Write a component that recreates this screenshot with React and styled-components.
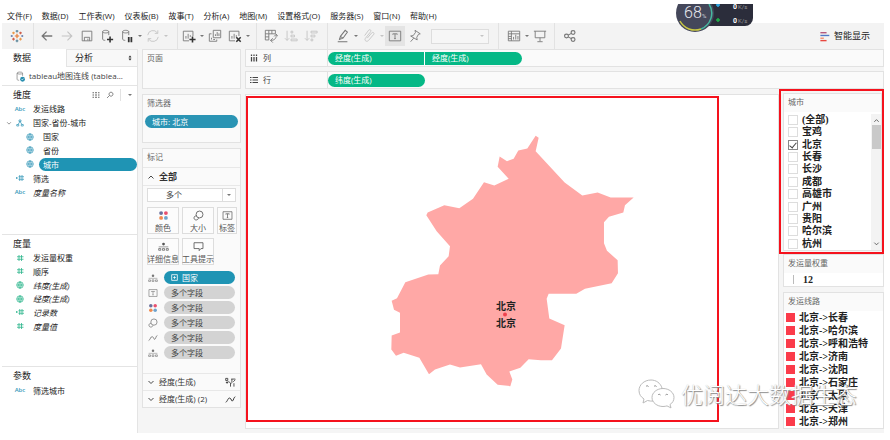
import React from 'react';
import styled, { createGlobalStyle, css } from 'styled-components';

const GlobalStyle = createGlobalStyle`
  * {
    box-sizing: border-box;
  }

  body {
    margin: 0;
    background: #fff;
    color: #444;
    font-family: 'Open Sans', 'Noto Sans CJK SC', sans-serif;
    font-size: 8px;
    line-height: 12px;
  }

  button, input, select {
    margin: 0;
    padding: 0;
    border: 0;
    background: none;
    color: inherit;
    font: inherit;
  }

  ul {
    margin: 0;
    padding: 0;
    list-style: none;
  }

  svg {
    display: block;
    flex-shrink: 0;
  }
`;

const Page = styled.div`
  position: relative;
  display: flex;
  flex-direction: column;
  min-height: 100vh;
  padding: 0 6px 8px 2px;
`;

const MenuBar = styled.nav`
  display: flex;
  align-items: flex-end;
  gap: 10px;
  height: 23px;
  padding: 0 5px 1px;
`;

const MenuItem = styled.button`
  color: #222;
  white-space: nowrap;
`;

const Toolbar = styled.div`
  display: flex;
  align-items: center;
  height: 26px;
  background: #f3f3f3;
  color: #777;
`;

const ToolGroup = styled.div`
  display: flex;
  align-items: center;
  height: 26px;
  padding: 0 ${({ $right }) => $right}px 0 ${({ $left }) => $left}px;
  border-right: 1px solid ${({ $last }) => ($last ? 'transparent' : '#e2e2e2')};
`;

const ToolButton = styled.button`
  display: flex;
  align-items: center;
  justify-content: center;
  width: 20px;
  height: 20px;
  background: ${({ $active }) => ($active ? '#e4e4e4' : 'none')};
  color: ${({ $faded }) => ($faded ? '#c4c4c4' : '#777')};
`;

const Caret = styled.span`
  width: 4px;
  margin: 0 1px;
  border: 2px solid transparent;
  border-top-color: ${({ $faded }) => ($faded ? '#c4c4c4' : '#777')};
  border-bottom: 0;
`;

const FitBox = styled.div`
  display: flex;
  align-items: center;
  width: 58px;
  height: 15px;
  margin-left: 6px;
  padding-right: 3px;
  border: 1px solid #ddd;
  background: #f6f6f6;
`;

const FitSelect = styled.select`
  appearance: none;
  flex: 1;
  min-width: 0;
  height: 13px;
`;

const ShowMe = styled.button`
  display: flex;
  align-items: center;
  gap: 4px;
  margin-left: auto;
  padding-right: 14px;
  color: #222;
  font-size: 9px;
`;

const Workspace = styled.div`
  display: flex;
  flex: 1;
  gap: 4px;
  background: #f5f5f5;
`;

const DataPane = styled.aside`
  display: flex;
  flex-direction: column;
  width: 136px;
  background: #fff;
  border-right: 1px solid #e4e4e4;
`;

const Tabs = styled.div`
  display: flex;
  height: 18px;
  font-size: 9px;
`;

const Tab = styled.button`
  display: flex;
  align-items: center;
  justify-content: space-between;
  width: ${({ $selected }) => ($selected ? '64px' : 'auto')};
  flex: ${({ $selected }) => ($selected ? 'none' : 1)};
  padding: 0 4px 0 ${({ $selected }) => ($selected ? 11 : 8)}px;
  color: #222;
  ${({ $selected }) =>
    !$selected &&
    css`
      background: #f8f8f8;
      border: 1px solid #e4e4e4;
      border-right: 0;
    `}
`;

const Source = styled.div`
  display: flex;
  align-items: center;
  gap: 3px;
  height: 18px;
  padding-left: 13px;
  white-space: nowrap;
`;

const PaneSection = styled.section`
  height: ${({ $height }) => ($height ? `${$height}px` : 'auto')};
  border-top: 1px solid #e4e4e4;
`;

const PaneHeader = styled.div`
  display: flex;
  align-items: center;
  gap: 6px;
  height: 16px;
  padding: 1px 4px 0 11px;
  color: #666;
`;

const PaneTitle = styled.h2`
  flex: 1;
  margin: 0;
  color: #222;
  font-size: 9px;
  font-weight: 400;
`;

const HeaderRule = styled.span`
  width: 1px;
  height: 12px;
  background: #e2e2e2;
`;

const FieldList = styled.ul`
  display: grid;
  grid-auto-rows: 1fr;
  height: ${({ $height }) => $height}px;
`;

const Field = styled.li`
  position: relative;
  display: flex;
  align-items: center;
  gap: 3px;
  padding-left: ${({ $nested }) => ($nested ? 22 : 12)}px;
  color: ${({ $measure }) => ($measure ? '#2cb58c' : '#3a9aba')};
`;

const Expander = styled.span`
  position: absolute;
  left: 4px;
  color: #666;
`;

const FieldIcon = styled.span`
  display: flex;
  justify-content: center;
  width: 12px;
  font-size: 6px;
  font-weight: 600;
`;

const FieldName = styled.span`
  flex: 1;
  height: 13px;
  padding-left: 4px;
  border-radius: 7px;
  background: ${({ $selected }) => ($selected ? '#1f94b4' : 'none')};
  color: ${({ $selected }) => ($selected ? '#fff' : '#222')};
  font-style: ${({ $generated }) => ($generated ? 'italic' : 'normal')};
  line-height: 13px;
  white-space: nowrap;
`;

const CardColumn = styled.div`
  display: flex;
  flex-direction: column;
  gap: 5px;
  width: 99px;
`;

const Card = styled.section`
  height: ${({ $height }) => ($height ? `${$height}px` : 'auto')};
  border: 1px solid #e2e2e2;
  background: #fafafa;
`;

const CardTitle = styled.h3`
  margin: 0;
  padding: 2px 4px 4px;
  color: #666;
  font-size: 8px;
  font-weight: 400;
  line-height: 12px;
`;

const Pill = styled.div`
  display: flex;
  align-items: center;
  gap: 4px;
  height: 13px;
  padding: 0 7px;
  border-radius: 7px;
  background: ${({ $tone }) => $tone};
  color: ${({ $dark }) => ($dark ? '#444' : '#fff')};
  white-space: nowrap;
`;

const FilterShelf = styled.div`
  padding: 2px;
`;

const LayerHeader = styled.button`
  display: flex;
  align-items: center;
  gap: 4px;
  width: 100%;
  height: ${({ $open }) => ($open ? 18 : 17)}px;
  padding: 0 4px;
  border-top: 1px solid #e8e8e8;
  color: #333;
  font-size: ${({ $open }) => ($open ? 9 : 8)}px;
  font-weight: ${({ $open }) => ($open ? 700 : 400)};
`;

const LayerName = styled.span`
  flex: 1;
  text-align: left;
`;

const MarksBody = styled.div`
  height: 188px;
  padding: 2px 4px;
  border-top: 1px solid #e8e8e8;
`;

const MarkType = styled.div`
  display: flex;
  align-items: center;
  height: 14px;
  padding-right: 3px;
  border: 1px solid #ddd;
  background: #fff;
`;

const MarkSelect = styled.select`
  appearance: none;
  flex: 1;
  height: 12px;
  margin-right: 3px;
  padding-left: 18px;
  border-right: 1px solid #ddd;
  color: #444;
`;

const MarkGrid = styled.div`
  display: grid;
  grid-template-columns: 32px 32px 20px;
  gap: 4px 3px;
  margin: 5px 0 6px;
`;

const MarkButton = styled.button`
  display: flex;
  flex-direction: column;
  align-items: center;
  justify-content: space-between;
  height: 27px;
  padding-top: 2px;
  border: 1px solid #ddd;
  background: #fcfcfc;
  color: #555;
  line-height: 11px;
  white-space: nowrap;
`;

const MarkRows = styled.ul`
  display: grid;
  gap: 2px;
`;

const MarkRow = styled.li`
  display: grid;
  grid-template-columns: 16px 71px;
  align-items: center;
  height: 13px;
  padding-left: 1px;
  color: #777;
`;

const Main = styled.main`
  display: flex;
  flex: 1;
  flex-direction: column;
  gap: 4px;
  min-width: 0;
`;

const Shelf = styled.div`
  display: flex;
  align-items: center;
  height: 18px;
  border: 1px solid #e2e2e2;
  background: #fafafa;
`;

const ShelfName = styled.div`
  display: flex;
  align-items: center;
  gap: 5px;
  width: 82px;
  height: 16px;
  padding-left: 4px;
  border-right: 1px solid #e2e2e2;
`;

const ShelfPill = styled(Pill)`
  width: 97px;
  background: #05b886;
  border-radius: ${({ $start, $end }) =>
    `${$start ? 7 : 0}px ${$end ? 7 : 0}px ${$end ? 7 : 0}px ${$start ? 7 : 0}px`};
  border-right: ${({ $end }) => ($end ? 0 : 1)}px solid #fff;
`;

const Stage = styled.div`
  display: flex;
  flex: 1;
  min-height: 0;
`;

const Canvas = styled.section`
  flex: 1;
  display: flex;
  min-width: 0;
  margin: 1px 0 4px;
  padding: 1px 59px 6px 0;
  border: 1px solid #e2e2e2;
  background: #fff;
`;

const MapFrame = styled.div`
  display: flex;
  flex: 1;
  min-width: 0;
  border: 2px solid #f5121d;
`;

const MapDrawing = styled.svg`
  flex: 1;
  width: 100%;
  min-width: 0;
`;

const MapLabel = styled.text`
  fill: #222;
  font-family: 'Liberation Serif', 'Noto Sans CJK SC', serif;
  font-size: 10px;
  font-weight: 700;
  text-anchor: middle;
`;

const Legends = styled.aside`
  display: flex;
  flex-direction: column;
  width: 105px;
  padding-bottom: 4px;
`;

const Highlight = styled.div`
  margin-top: -4px;
  padding: 2px 0 1px 2px;
  border: 2px solid #f5121d;
`;

const LegendCard = styled(Card)`
  margin: ${({ $grow }) => ($grow ? 5 : 0)}px 0 0 ${({ $inset }) => ($inset ? 4 : 0)}px;
  flex: ${({ $grow }) => ($grow ? 1 : 'none')};
`;

const CityBody = styled.div`
  display: flex;
  height: 138px;
  padding-top: 2px;
  background: #fff;
`;

const CityList = styled.ul`
  display: grid;
  flex: 1;
  grid-auto-rows: 1fr;
`;

const CityLabel = styled.label`
  display: flex;
  align-items: center;
  gap: 4px;
  padding-left: 4px;
  color: #222;
  font-family: 'Liberation Serif', 'Noto Sans CJK SC', serif;
  font-size: 10px;
  font-weight: 700;
  line-height: 12px;
`;

const Checkbox = styled.input`
  appearance: none;
  display: flex;
  justify-content: center;
  width: 10px;
  height: 10px;
  border: 1px solid #ddd;
  background: #fff;

  &:checked {
    border-color: #888;
  }

  &:checked::after {
    content: '';
    width: 3px;
    height: 6px;
    border: solid #444;
    border-width: 0 1px 1px 0;
    transform: rotate(40deg);
  }
`;

const Scrollbar = styled.div`
  display: flex;
  flex-direction: column;
  align-items: center;
  width: 10px;
  padding: 3px 0;
  background: #f3f3f3;
  color: #444;
`;

const Thumb = styled.div`
  width: 9px;
  height: 24px;
  margin: 1px 0 auto;
  background: #c9c9c9;
`;

const SizeRow = styled.div`
  display: flex;
  align-items: center;
  gap: 9px;
  height: 13px;
  padding-left: 9px;
  background: #fff;
  color: #222;
  font-family: 'Liberation Serif', serif;
  font-size: 10px;
  font-weight: 700;

  &::before {
    content: '';
    width: 1px;
    height: 9px;
    background: #bbb;
  }
`;

const RouteList = styled.ul`
  background: #fff;
`;

const Route = styled.li`
  display: flex;
  align-items: center;
  gap: 4px;
  height: 13px;
  padding-left: 2px;
  color: #222;
  font-family: 'Liberation Serif', 'Noto Sans CJK SC', serif;
  font-size: 10px;
  font-weight: 700;
  white-space: nowrap;

  &::before {
    content: '';
    width: 9px;
    height: 9px;
    background: #fb3b4a;
  }
`;

const SpeedMeter = styled.svg`
  position: absolute;
  top: 4px;
  right: 135px;
`;

const Watermark = styled.div`
  position: absolute;
  right: 33px;
  bottom: 32px;
  display: flex;
  align-items: center;
  gap: 6px;
  color: #fff;
  font-size: 22px;
  font-weight: 300;
  line-height: 30px;
  text-shadow: 1px 1px 1px #888, 0 0 1px #bbb;
  pointer-events: none;
`;

const glyphs = {
  logo: (
    <g strokeWidth="1.3">
      <path d="M8 5.5v5M5.5 8h5" stroke="#e8762d" />
      <path d="M4 3v3M2.5 4.5h3M12 10v3M10.5 11.5h3" stroke="#eb9a4c" />
      <path d="M12 3v3M10.5 4.5h3M4 10v3M2.5 11.5h3" stroke="#d0604c" />
      <path d="M8 1v3M6.5 2.5h3M8 12v3M6.5 13.5h3" stroke="#5b879b" />
      <path d="M2 6.8v2.4M.8 8h2.4M14 6.8v2.4M12.8 8h2.4" stroke="#6a80ad" />
    </g>
  ),
  back: <path d="M14 8H2.5M7.5 3L2.5 8l5 5" strokeWidth="1.5" />,
  forward: <path d="M2 8h11.5M8.5 3l5 5-5 5" strokeWidth="1.3" />,
  save: <path d="M2.5 2.5h11v11h-11zM5 13.5v-4h6v4M9 11v2" />,
  addData: (
    <g>
      <path d="M3 3c0-2 7-2 7 0s-7 2-7 0v8.5c0 1 1.5 1.5 3 1.5M10 3v4" />
      <path d="M11.5 8.5v7M8 12h7" stroke="#333" strokeWidth="1.8" />
    </g>
  ),
  pauseData: (
    <g>
      <path d="M3 3c0-2 7-2 7 0s-7 2-7 0v8.5c0 1 1.5 1.5 3 1.5M10 3v4" />
      <path d="M10 9v6M13 9v6" stroke="#333" strokeWidth="2" />
    </g>
  ),
  source: (
    <g>
      <path d="M3 3c0-2 8-2 8 0s-8 2-8 0v9c0 1 1.5 1.5 3 1.5M11 3v4" stroke="#777" />
      <circle cx="11" cy="12" r="3.5" fill="#2a8fb0" stroke="none" />
      <path d="M9.5 12l1 1 2-2" stroke="#fff" />
    </g>
  ),
  refresh: <path d="M2 7a6 6 0 0 1 11-2.5M14 9a6 6 0 0 1-11 2.5M13.5 1.5v3.500H10M2.5 14.5V11H6" />,
  newSheet: (
    <g>
      <path d="M8 13.5H1.5v-11h11V8M4.5 11V8M7 11V5.5M9.5 9V7" />
      <path d="M12 8.5v7M8.5 12h7" stroke="#333" strokeWidth="1.8" />
    </g>
  ),
  duplicate: <path d="M6 1.5h8.500V10H6zM4 5.5H1.5V14H10v-2M8.5 8V6M10.5 8V3.500M12.5 8V5M4 12v-2M6 12h2" />,
  clearSheet: (
    <g>
      <path d="M8 13.5H1.5v-11h11V8M4.5 11V8M7 11V5.5M9.5 9V7" />
      <path d="M9.5 9.5l5 5M14.5 9.5l-5 5" stroke="#333" strokeWidth="1.8" />
    </g>
  ),
  swap: <path d="M1.5 1.500h11.500v4H5.500v7h-4zM5.500 1.500v4h-4M9 1.500v4M1.500 9h4M14 6v1c0 4-2 6-6.500 6M10 10.500L7.500 13l2.500 2.500M11.500 8.500L14 6l2 2.500" />,
  sortAsc: <path d="M3.5 2v11M1 10.5L3.5 13 6 10.5M8 2.5h2v2H8zM8 7h4v2H8zM8 11.5h7v2H8z" />,
  sortDesc: <path d="M3.5 2v11M1 10.5L3.5 13 6 10.5M8 2.5h7v2H8zM8 7h4.500v2H8zM8 11.5h2v2H8z" />,
  highlight: <path d="M5 8.500L10.500 1.500l2.500 2L8 10.500 4 12zM5 8.500l3 2M2 14.500h11" strokeWidth="1.2" />,
  clip: <path d="M6 10.5l5-6c1.5-1.5 3.5 0 2.5 1.500l-6 7c-2 2.500-5.500 0-3.500-2.500l5.500-7c2-2.500-1-3.500-2-2L3 7.500" />,
  text: <path d="M1.5 2.5h13v11h-13zM5.5 6.500v-1h5v1M8 5.500v5.500M7 11h2" />,
  pin: <path d="M8 1.500l6 4-2 .5-2 3.500.5 3L3 8l3-.5L8.500 4zM6.500 10.500L3 14.500" />,
  cards: <path d="M1.500 2.500h13v11h-13zM5 2.500v11M1.500 5.500h13M1.500 8.500H5M1.500 11H5M7.500 12V9M10 12V6.500M12.500 12V8" />,
  present: <path d="M1 2.500h14M2.500 2.500v7.500h11V2.500M8 10v4M5 14.500h6" />,
  share: (
    <g strokeWidth="1.3">
      <circle cx="4" cy="8" r="2.2" />
      <circle cx="11.5" cy="4" r="2.2" />
      <circle cx="11.5" cy="12" r="2.2" />
      <path d="M6 7l3.500-2M6 9l3.500 2" />
    </g>
  ),
  showMe: (
    <g strokeWidth="2">
      <path d="M2 2.500h9" stroke="#b2557b" />
      <path d="M2 6.500h13" stroke="#4e79c7" />
      <path d="M2 10.500h5" stroke="#f28e6b" />
      <path d="M2 14h9" stroke="#e8473f" />
    </g>
  ),
  columns: <path d="M3 6v9M8 6v9M13 6v9M3 1v3M8 1v3M13 1v3" strokeWidth="2.5" />,
  rows: <path d="M5 3h11M5 8h11M5 13h11M0 3h3M0 8h3M0 13h3" strokeWidth="2.2" />,
  grid: <path d="M1 3.500h3M6 3.500h4M12 3.500h3M1 8h3M6 8h4M12 8h3M1 12.500h3M6 12.500h4M12 12.500h3" strokeWidth="2" />,
  search: <path d="M7 9a4 4 0 1 1 6 0 4 4 0 0 1-6 0L2 14" strokeWidth="1.5" />,
  down: <path d="M3 6l5 5 5-5" strokeWidth="1.8" />,
  up: <path d="M3 11l5-5 5 5" strokeWidth="1.8" />,
  sorter: <path d="M8 2L5 6h6zM8 14l-3-4h6z" fill="currentColor" />,
  globe: (
    <g strokeWidth="1.5">
      <circle cx="8" cy="8" r="6.5" />
      <path d="M1.500 8h13M8 1.500v13M8 1.500c-4 4-4 9 0 13M8 1.500c4 4 4 9 0 13" />
    </g>
  ),
  hierarchy: <path d="M6 2h4v3H6zM1.500 11h4v3h-4zM10.500 11h4v3h-4zM8 5L4 11M8 5l4 6" strokeWidth="1.5" />,
  number: <path d="M6 2v12M11 2v12M2 5.500h13M2 10.500h13" strokeWidth="1.6" />,
  calc: <path d="M7.500 2v12M12 2v12M5 5.500h11M5 10.500h11M0 7h3M0 9h3" strokeWidth="1.6" />,
  colour: (
    <g stroke="none">
      <circle cx="4.5" cy="4.5" r="2.8" fill="#6a6f9c" />
      <circle cx="11.5" cy="4.5" r="2.8" fill="#e8506e" />
      <circle cx="4.5" cy="11.5" r="2.8" fill="#f08a4e" />
      <circle cx="11.5" cy="11.5" r="2.8" fill="#6fa3cc" />
    </g>
  ),
  size: (
    <g strokeWidth="1.2">
      <circle cx="9.5" cy="6.5" r="5" />
      <path d="M4.700 8.500C2.500 8.500 1.500 10 1.500 11.500c0 4 6 4 6.500 0" />
    </g>
  ),
  detail: (
    <g>
      <circle cx="8" cy="4.5" r="2" fill="currentColor" stroke="none" />
      <path d="M1 8.500h14" strokeWidth=".8" />
      <path d="M1 11h3v2.500H1zM6.500 11h3v2.500h-3zM12 11h3v2.500h-3z" />
    </g>
  ),
  tooltip: <path d="M1.500 2.500h13v8.500h-3L9 14v-3H1.500z" strokeWidth="1.2" />,
  path: <path d="M1 12c3-1 3-7 6-6s2 5 4 4 1-5 4-6" strokeWidth="1.4" />,
  expand: <path d="M1.500 1.500h13v13h-13zM8 5v6M5 8h6" strokeWidth="1.8" />,
  shapes: (
    <g strokeWidth="1.2">
      <path d="M1 2h3v3H1zM5 6l3 3v5M9 3h6M10 3v5l-2 2M12 7l3-3M13 9v5" />
      <circle cx="3" cy="8" r="1" fill="currentColor" />
    </g>
  ),
};

const Icon = ({ name, size = 14 }) => (
  <svg
    width={size}
    height={size}
    viewBox="0 0 16 16"
    fill="none"
    stroke="currentColor"
    strokeWidth="1"
    aria-hidden="true"
  >
    {glyphs[name]}
  </svg>
);

const menus = [
  '文件(F)', '数据(D)', '工作表(W)', '仪表板(B)', '故事(T)', '分析(A)',
  '地图(M)', '设置格式(O)', '服务器(S)', '窗口(N)', '帮助(H)',
];

const toolGroups = [
  { left: 5, right: 6, tools: [{ icon: 'logo', label: '起始页' }] },
  {
    left: 3,
    right: 8,
    tools: [
      { icon: 'back', label: '撤消' },
      { icon: 'forward', label: '重做', faded: true },
      { icon: 'save', label: '保存' },
      { icon: 'addData', label: '新建数据源' },
      { icon: 'pauseData', label: '暂停自动更新', caret: true },
      { icon: 'refresh', label: '运行更新', caret: true, faded: true },
    ],
  },
  {
    left: 1,
    right: 5,
    tools: [
      { icon: 'newSheet', label: '新建工作表', caret: true },
      { icon: 'duplicate', label: '复制' },
      { icon: 'clearSheet', label: '清除工作表', caret: true },
    ],
  },
  {
    left: 4,
    right: 6,
    tools: [
      { icon: 'swap', label: '交换行和列' },
      { icon: 'sortAsc', label: '升序排序', faded: true },
      { icon: 'sortDesc', label: '降序排序', faded: true },
    ],
  },
  {
    left: 5,
    right: 9,
    select: true,
    tools: [
      { icon: 'highlight', label: '突出显示', caret: true },
      { icon: 'clip', label: '组成员', caret: true, faded: true },
      { icon: 'text', label: '显示标记标签', active: true },
      { icon: 'pin', label: '固定轴' },
    ],
  },
  {
    left: 5,
    right: 4,
    tools: [
      { icon: 'cards', label: '显示/隐藏卡', caret: true },
      { icon: 'present', label: '演示模式' },
    ],
  },
  { left: 5, right: 0, last: true, tools: [{ icon: 'share', label: '共享' }] },
];

const dimensions = [
  { name: '发运线路' },
  { name: '国家-省份-城市', icon: 'hierarchy', open: true },
  { name: '国家', icon: 'globe', nested: true },
  { name: '省份', icon: 'globe', nested: true },
  { name: '城市', icon: 'globe', nested: true, selected: true },
  { name: '筛选', icon: 'calc' },
  { name: '度量名称', generated: true },
];

const measures = [
  { name: '发运量权重', icon: 'number' },
  { name: '顺序', icon: 'number' },
  { name: '纬度(生成)', icon: 'globe', generated: true },
  { name: '经度(生成)', icon: 'globe', generated: true },
  { name: '记录数', icon: 'calc', generated: true },
  { name: '度量值', icon: 'number', generated: true },
];

const markButtons = [
  ['colour', '颜色'],
  ['size', '大小'],
  ['text', '标签'],
  ['detail', '详细信息'],
  ['tooltip', '工具提示'],
];

const markRows = ['text', 'colour', 'size', 'path', 'detail'];

const cities = [
  '(全部)', '宝鸡', '北京', '长春', '长沙', '成都', '高雄市', '广州', '贵阳', '哈尔滨', '杭州',
];

const routes = ['长春', '哈尔滨', '呼和浩特', '济南', '沈阳', '石家庄', '太原', '天津', '郑州'];

const Fields = ({ items, measure, height }) => (
  <FieldList $height={height}>
    {items.map((field) => (
      <Field key={field.name} $nested={field.nested} $measure={measure}>
        {field.open && (
          <Expander>
            <Icon name="down" size={6} />
          </Expander>
        )}
        <FieldIcon>{field.icon ? <Icon name={field.icon} size={8} /> : 'Abc'}</FieldIcon>
        <FieldName $selected={field.selected} $generated={field.generated}>
          {field.name}
        </FieldName>
      </Field>
    ))}
  </FieldList>
);

const BeijingMap = () => (
  <MapDrawing viewBox="0 0 469 321" role="img" aria-label="北京">
    <g transform="translate(122 22) scale(0.3333)">
      <polygon
        fill="#ffa8a6"
        points="497,46 506,52 497,92 584,186 637,225 683,216 722,231 791,231 765,254 760,276 717,289 702,305 702,368 711,391 743,419 744,458 725,488 645,505 619,520 536,520 530,535 538,594 584,614 573,684 546,719 513,719 476,716 451,742 418,753 427,777 421,797 383,793 350,762 333,731 270,741 240,732 195,747 177,761 148,712 101,697 78,706 64,687 65,645 90,636 90,577 72,568 65,541 81,533 106,485 175,462 205,461 210,435 236,407 240,377 200,332 169,284 173,276 223,254 268,263 309,235 342,185 373,195 416,175 383,139 389,108 411,122 431,115 445,90 472,84"
      />
    </g>
    <circle cx="257" cy="216" r="2" fill="#f0434e" />
    <MapLabel x="258" y="211">北京</MapLabel>
    <MapLabel x="258" y="228">北京</MapLabel>
  </MapDrawing>
);

const Meter = () => (
  <SpeedMeter width="80" height="30" viewBox="0 0 80 30" fontFamily="Roboto, sans-serif">
    <path d="M20 0h58v14a8 8 0 0 1-8 8H20z" fill="#2b2d3b" />
    <circle cx="20" cy="9" r="19" fill="#44475a" />
    <path d="M5 17a17 17 0 0 0 21 8" fill="none" stroke="#c9c843" strokeWidth="1.5" />
    <path d="M26 25a17 17 0 0 0 8-25" fill="none" stroke="#46b8a0" strokeWidth="1.5" />
    <text x="9" y="14" fill="#e8e8ee" fontSize="16" fontWeight="300">68</text>
    <text x="27" y="14" fill="#d0d0d8" fontSize="6">%</text>
    <path d="M43 0v3M41 1h4" stroke="#2fa9e6" strokeWidth="1.5" />
    <path d="M43 14v4M41 16h4" stroke="#21b04b" strokeWidth="1.5" />
    <text x="58" y="5" fill="#fff" fontSize="7" fontWeight="700">0</text>
    <text x="63" y="5" fill="#999" fontSize="6">K/s</text>
    <text x="58" y="19" fill="#fff" fontSize="7" fontWeight="700">0</text>
    <text x="63" y="19" fill="#999" fontSize="6">K/s</text>
  </SpeedMeter>
);

const ChatBubbles = () => (
  <svg width="37" height="30" viewBox="0 0 37 30" fill="#fff" stroke="#bbb" strokeWidth="1">
    <path d="M13 1C6 1 1 6 1 11.500c0 4 2 6.500 5 8.500l-1 4 4.500-2.500c2 .6 4 .7 6 .5L24 9C22.500 4 18 1 13 1z" />
    <path d="M25 9.500c-6 0-11 4-11 9s5 9 11 9c1.500 0 3-.3 4-.6l4 2-1-3.400c2.500-1.500 4-4 4-7 0-5-5-9-11-9z" />
    <g fill="none" stroke="#888">
      <path d="M8 7.500a1.500 1.500 0 0 1 2.500 0M16 7.500a1.500 1.500 0 0 1 2.500 0M20 16a1.500 1.500 0 0 1 2.500 0M27.500 16a1.500 1.500 0 0 1 2.500 0" />
    </g>
  </svg>
);

const App = () => (
  <Page>
    <GlobalStyle />
    <MenuBar>
      {menus.map((menu) => (
        <MenuItem key={menu}>{menu}</MenuItem>
      ))}
    </MenuBar>

    <Toolbar>
      {toolGroups.map((group) => (
        <ToolGroup key={group.tools[0].icon} $left={group.left} $right={group.right} $last={group.last}>
          {group.tools.map((tool) => (
            <React.Fragment key={tool.icon}>
              <ToolButton aria-label={tool.label} $active={tool.active} $faded={tool.faded}>
                <Icon name={tool.icon} />
              </ToolButton>
              {tool.caret && <Caret $faded={tool.faded} />}
            </React.Fragment>
          ))}
          {group.select && (
            <FitBox>
              <FitSelect aria-label="适合" />
              <Caret $faded />
            </FitBox>
          )}
        </ToolGroup>
      ))}
      <ShowMe>
        <Icon name="showMe" size={11} />
        智能显示
      </ShowMe>
    </Toolbar>

    <Workspace>
      <DataPane>
        <Tabs>
          <Tab $selected>数据</Tab>
          <Tab>
            分析
            <Icon name="sorter" size={6} />
          </Tab>
        </Tabs>
        <Source>
          <Icon name="source" size={11} />
          tableau地图连线 (tablea...
        </Source>
        <PaneSection $height={149}>
          <PaneHeader>
            <PaneTitle>维度</PaneTitle>
            <Icon name="grid" size={8} />
            <Icon name="search" size={8} />
            <HeaderRule />
            <Caret />
          </PaneHeader>
          <Fields items={dimensions} height={97} />
        </PaneSection>
        <PaneSection $height={132}>
          <PaneHeader>
            <PaneTitle>度量</PaneTitle>
          </PaneHeader>
          <Fields items={measures} height={82} measure />
        </PaneSection>
        <PaneSection>
          <PaneHeader>
            <PaneTitle>参数</PaneTitle>
          </PaneHeader>
          <Fields items={[{ name: '筛选城市' }]} height={14} />
        </PaneSection>
      </DataPane>

      <CardColumn>
        <Card $height={40}>
          <CardTitle>页面</CardTitle>
        </Card>
        <Card $height={49}>
          <CardTitle>筛选器</CardTitle>
          <FilterShelf>
            <Pill $tone="#2a94b4">城市: 北京</Pill>
          </FilterShelf>
        </Card>
        <Card>
          <CardTitle>标记</CardTitle>
          <LayerHeader $open>
            <Icon name="up" size={8} />
            <LayerName>全部</LayerName>
          </LayerHeader>
          <MarksBody>
            <MarkType>
              <MarkSelect aria-label="标记类型">
                <option>多个</option>
              </MarkSelect>
              <Caret />
            </MarkType>
            <MarkGrid>
              {markButtons.map(([icon, label]) => (
                <MarkButton key={icon}>
                  <Icon name={icon} size={11} />
                  {label}
                </MarkButton>
              ))}
            </MarkGrid>
            <MarkRows>
              <MarkRow>
                <Icon name="detail" size={10} />
                <Pill $tone="#1f94b4">
                  <Icon name="expand" size={7} />
                  国家
                </Pill>
              </MarkRow>
              {markRows.map((icon) => (
                <MarkRow key={icon}>
                  <Icon name={icon} size={10} />
                  <Pill $tone="#d3d3d3" $dark>多个字段</Pill>
                </MarkRow>
              ))}
            </MarkRows>
          </MarksBody>
          <LayerHeader>
            <Icon name="down" size={8} />
            <LayerName>经度(生成)</LayerName>
            <Icon name="shapes" size={11} />
          </LayerHeader>
          <LayerHeader>
            <Icon name="down" size={8} />
            <LayerName>经度(生成) (2)</LayerName>
            <Icon name="path" size={11} />
          </LayerHeader>
        </Card>
      </CardColumn>

      <Main>
        <Shelf>
          <ShelfName>
            <Icon name="columns" size={8} />
            列
          </ShelfName>
          <ShelfPill $start>经度(生成)</ShelfPill>
          <ShelfPill $end>经度(生成)</ShelfPill>
        </Shelf>
        <Shelf>
          <ShelfName>
            <Icon name="rows" size={8} />
            行
          </ShelfName>
          <ShelfPill $start $end>纬度(生成)</ShelfPill>
        </Shelf>
        <Stage>
          <Canvas>
            <MapFrame>
              <BeijingMap />
            </MapFrame>
          </Canvas>
          <Legends>
            <Highlight>
              <LegendCard>
                <CardTitle>城市</CardTitle>
                <CityBody>
                  <CityList>
                    {cities.map((city) => (
                      <li key={city}>
                        <CityLabel>
                          <Checkbox type="checkbox" defaultChecked={city === '北京'} />
                          {city}
                        </CityLabel>
                      </li>
                    ))}
                  </CityList>
                  <Scrollbar>
                    <Icon name="up" size={7} />
                    <Thumb />
                    <Icon name="down" size={7} />
                  </Scrollbar>
                </CityBody>
              </LegendCard>
            </Highlight>
            <LegendCard $inset>
              <CardTitle>发运量权重</CardTitle>
              <SizeRow>12</SizeRow>
            </LegendCard>
            <LegendCard $inset $grow>
              <CardTitle>发运线路</CardTitle>
              <RouteList>
                {routes.map((route) => (
                  <Route key={route}>北京-&gt;{route}</Route>
                ))}
              </RouteList>
            </LegendCard>
          </Legends>
        </Stage>
      </Main>
    </Workspace>

    <Meter />
    <Watermark>
      <ChatBubbles />
      优阅达大数据生态
    </Watermark>
  </Page>
);

export default App;
